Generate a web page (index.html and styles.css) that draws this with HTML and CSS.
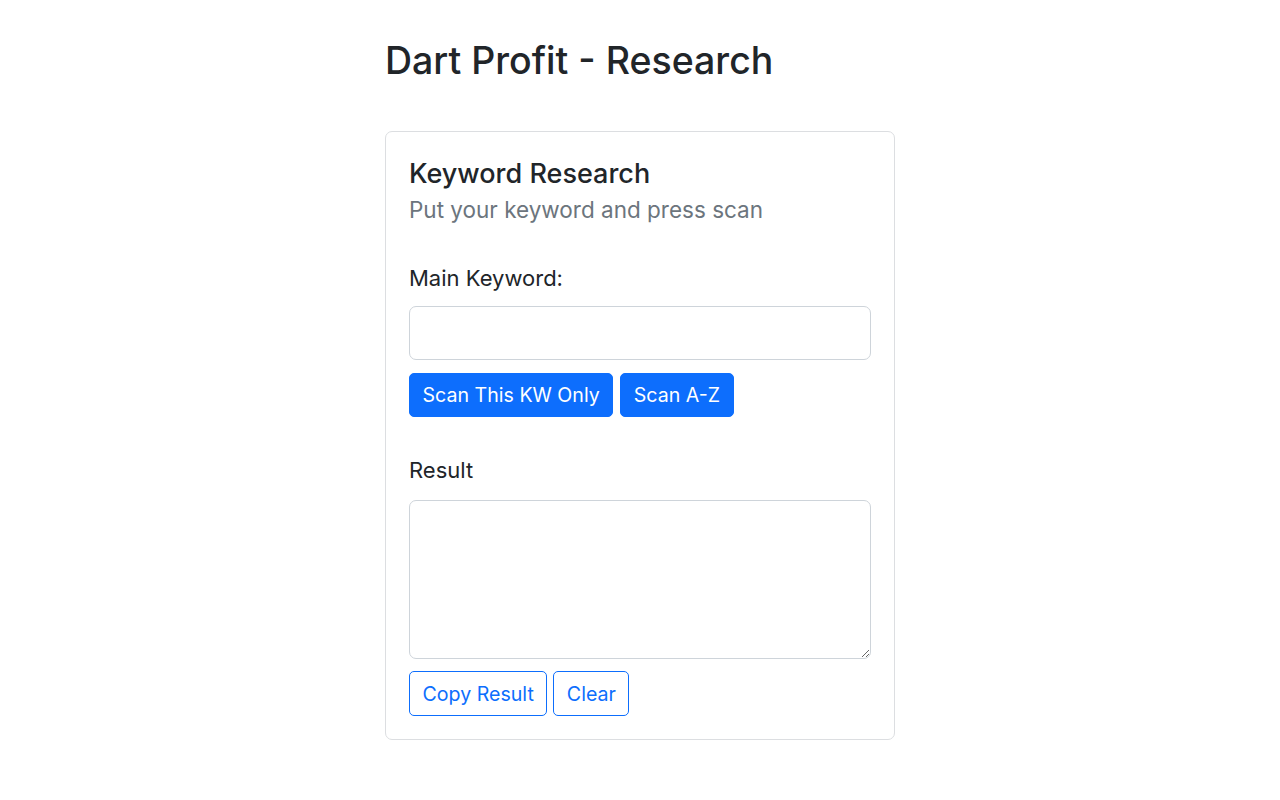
FILE: index.html
```html
<!DOCTYPE html>
<html lang="en">
<head>
<meta charset="utf-8">
<title>Dart Profit - Research</title>
<link rel="stylesheet" href="styles.css">
</head>
<body>
<main class="page">
  <h1 class="page-title">Dart Profit - Research</h1>
  <section class="card">
    <h2 class="card-title">Keyword Research</h2>
    <p class="card-subtitle">Put your keyword and press scan</p>
    <label class="field-label label-kw" for="kw">Main Keyword:</label>
    <input class="form-control" id="kw" type="text">
    <div class="btn-row btn-row-scan">
      <button class="btn btn-primary btn-scan-one">Scan This KW Only</button>
      <button class="btn btn-primary btn-scan-az">Scan A-Z</button>
    </div>
    <label class="field-label label-result" for="result">Result</label>
    <textarea class="form-control result-area" id="result"></textarea>
    <div class="btn-row btn-row-result">
      <button class="btn btn-outline btn-copy">Copy Result</button>
      <button class="btn btn-outline btn-clear">Clear</button>
    </div>
  </section>
</main>
</body>
</html>
```

FILE: styles.css
```css
* { box-sizing: border-box; }
html, body {
  margin: 0;
  padding: 0;
  background: #ffffff;
}
body {
  font-family: Inter, "Liberation Sans", Arial, sans-serif;
  color: #212529;
  font-size: 20px;
}
.page {
  width: 510px;
  margin: 0 auto;
  padding-top: 38px;
}
.page-title {
  margin: 0;
  font-size: 37.5px;
  line-height: 46px;
  font-weight: 500;
  color: #212529;
}
.card {
  margin-top: 47px;
  border: 1px solid #dcdee1;
  border-radius: 7px;
  padding: 26px 23px 23px 23px;
  display: flex;
  flex-direction: column;
}
.card-title {
  margin: 0;
  font-size: 27px;
  line-height: 32px;
  font-weight: 500;
}
.card-subtitle {
  margin: 6px 0 0 0;
  font-size: 22.5px;
  line-height: 27px;
  color: #6c757d;
}
.field-label {
  display: block;
  font-size: 22px;
  line-height: 30px;
}
.label-kw { margin-top: 40px; margin-bottom: 13px; }
.label-result { margin-top: 38px; margin-bottom: 15px; }
.form-control {
  display: block;
  width: 100%;
  border: 1px solid #ced4da;
  border-radius: 7px;
  background: #fff;
  font-family: inherit;
  font-size: 20px;
  padding: 8px 14px;
  margin: 0;
}
#kw { height: 54px; }
.result-area { height: 159px; resize: both; }
.btn-row {
  display: flex;
  gap: 7px;
}
.btn-row-scan { margin-top: 13px; }
.btn-row-result { margin-top: 12px; gap: 6px; }
.btn {
  font-family: inherit;
  font-size: 19.6px;
  line-height: 24px;
  padding: 0 12.5px;
  border-radius: 5px;
  cursor: pointer;
}
.btn-primary {
  height: 44px;
  background: #0d6efd;
  border: 1px solid #0d6efd;
  color: #ffffff;
}
.btn-outline {
  height: 45px;
  background: #ffffff;
  border: 1px solid #0d6efd;
  color: #0d6efd;
}
```
